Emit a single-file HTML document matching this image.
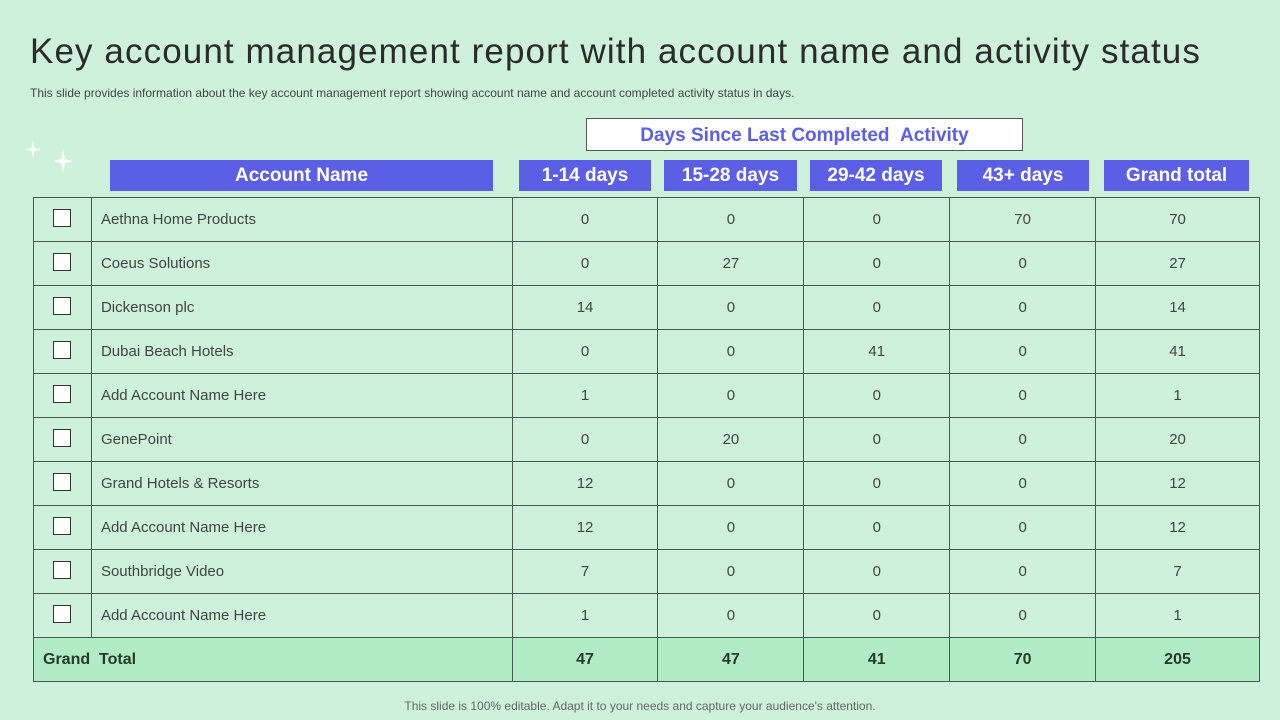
<!DOCTYPE html><html><head><style>
body{margin:0;width:1280px;height:720px;background:#cdf1da;font-family:"Liberation Sans",sans-serif;position:relative;overflow:hidden}
.a{position:absolute}
h1{position:absolute;left:30px;top:32px;margin:0;font-weight:normal;font-size:35px;color:#2b2b2b;letter-spacing:1.1px;white-space:nowrap}
.sub{left:30px;top:86px;font-size:12px;color:#444;white-space:nowrap}
.hb{position:absolute;top:160px;height:31px;background:#5b5fe6;color:#fff;font-weight:bold;font-size:19px;text-align:center;line-height:31px}
table{position:absolute;left:33px;top:197px;border-collapse:collapse;width:1227px}
td{border:1.5px solid #4a5a4e;height:43px;padding:0;font-size:15px;color:#444;text-align:center}
td.n{text-align:left;padding-left:9px}
.cb{display:inline-block;width:16px;height:16px;background:#fff;border:1px solid #333}
tr.g td{background:#b2ecc6;font-weight:bold;color:#263a2c;font-size:16px}
</style></head><body>
<h1>Key account management report with account name and activity status</h1>
<div class="a sub">This slide provides information about the key account management report showing account name and account completed activity status in days.</div>
<div class="a" style="left:586px;top:118px;width:435px;height:31px;background:#fff;border:1px solid #555;color:#5b5fe6;font-weight:bold;font-size:19px;text-align:center;line-height:33px">Days Since Last Completed &nbsp;Activity</div>
<svg class="a" style="left:22px;top:138px" width="55" height="42"><path d="M11 2 L12.5 10 L19 11.5 L12.5 13 L11 20 L9.5 13 L3 11.5 L9.5 10Z" fill="#fff"/><path d="M41 11 L43 21 L51 23 L43 25 L41 35 L39 25 L31 23 L39 21Z" fill="#fff"/></svg>
<div class="hb" style="left:110px;width:383px">Account Name</div>
<div class="hb" style="left:519px;width:132px">1-14 days</div>
<div class="hb" style="left:664px;width:133px">15-28 days</div>
<div class="hb" style="left:810px;width:132px">29-42 days</div>
<div class="hb" style="left:957px;width:132px">43+ days</div>
<div class="hb" style="left:1104px;width:145px">Grand total</div>
<table>
<colgroup><col style="width:58px"><col style="width:421px"><col style="width:146px"><col style="width:146px"><col style="width:146px"><col style="width:146px"><col style="width:164px"></colgroup>
<tr><td><span class="cb"></span></td><td class="n">Aethna Home Products</td><td>0</td><td>0</td><td>0</td><td>70</td><td>70</td></tr>
<tr><td><span class="cb"></span></td><td class="n">Coeus Solutions</td><td>0</td><td>27</td><td>0</td><td>0</td><td>27</td></tr>
<tr><td><span class="cb"></span></td><td class="n">Dickenson plc</td><td>14</td><td>0</td><td>0</td><td>0</td><td>14</td></tr>
<tr><td><span class="cb"></span></td><td class="n">Dubai Beach Hotels</td><td>0</td><td>0</td><td>41</td><td>0</td><td>41</td></tr>
<tr><td><span class="cb"></span></td><td class="n">Add Account Name Here</td><td>1</td><td>0</td><td>0</td><td>0</td><td>1</td></tr>
<tr><td><span class="cb"></span></td><td class="n">GenePoint</td><td>0</td><td>20</td><td>0</td><td>0</td><td>20</td></tr>
<tr><td><span class="cb"></span></td><td class="n">Grand Hotels &amp; Resorts</td><td>12</td><td>0</td><td>0</td><td>0</td><td>12</td></tr>
<tr><td><span class="cb"></span></td><td class="n">Add Account Name Here</td><td>12</td><td>0</td><td>0</td><td>0</td><td>12</td></tr>
<tr><td><span class="cb"></span></td><td class="n">Southbridge Video</td><td>7</td><td>0</td><td>0</td><td>0</td><td>7</td></tr>
<tr><td><span class="cb"></span></td><td class="n">Add Account Name Here</td><td>1</td><td>0</td><td>0</td><td>0</td><td>1</td></tr>
<tr class="g"><td colspan="2" style="text-align:left;padding-left:9px">Grand &nbsp;Total</td><td>47</td><td>47</td><td>41</td><td>70</td><td>205</td></tr>
</table>
<div class="a" style="left:0;width:1280px;top:699px;text-align:center;font-size:12px;color:#666">This slide is 100% editable. Adapt it to your needs and capture your audience's attention.</div>
</body></html>
